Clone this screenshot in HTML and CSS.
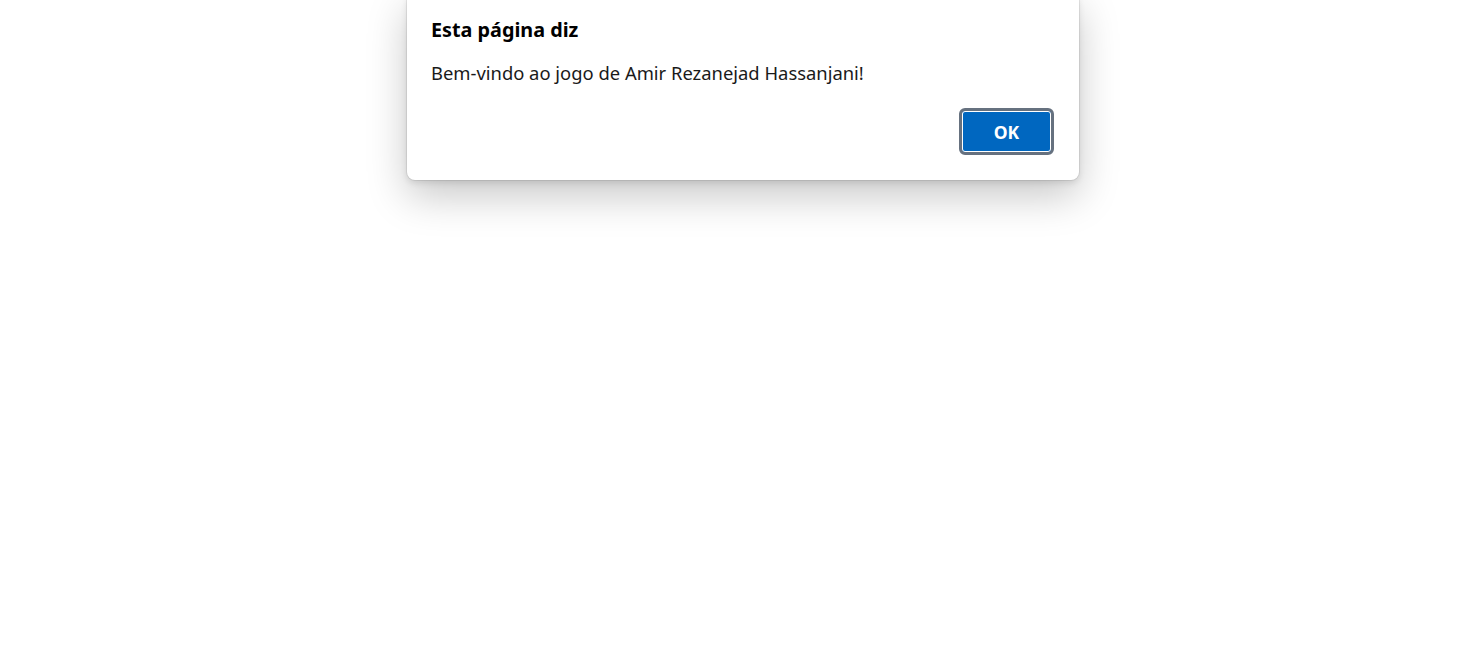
FILE: index.html
```html
<!DOCTYPE html>
<html lang="pt">
<head>
<meta charset="utf-8">
<title>Alerta</title>
<link rel="stylesheet" href="styles.css">
</head>
<body>
<div class="dialog" role="alertdialog">
  <h1 class="dialog-title">Esta página diz</h1>
  <p class="dialog-message">Bem-vindo ao jogo de Amir Rezanejad Hassanjani!</p>
  <div class="dialog-actions">
    <button class="btn-ok" type="button">OK</button>
  </div>
</div>
</body>
</html>
```
FILE: styles.css
```css
html, body {
  margin: 0;
  padding: 0;
  background: #ffffff;
  width: 1480px;
  height: 655px;
  overflow: hidden;
}
body {
  font-family: "Noto Sans", "Open Sans", sans-serif;
  color: #1a1a1a;
}
.dialog {
  position: absolute;
  left: 407px;
  top: -7px;
  width: 672px;
  box-sizing: border-box;
  padding: 24px 25px 25px 24px;
  background: #ffffff;
  border-radius: 8px;
  box-shadow: 0 0 0 1px rgba(0,0,0,0.07), 0 16px 40px rgba(0,0,0,0.22), 0 3px 6px rgba(0,0,0,0.1);
  display: flex;
  flex-direction: column;
}
.dialog-title {
  margin: 0;
  font-size: 19.8px;
  font-weight: 700;
  line-height: 26px;
  color: #000000;
}
.dialog-message {
  margin: 18px 0 0 0;
  font-size: 18.4px;
  line-height: 24px;
  color: #1a1a1a;
}
.dialog-actions {
  display: flex;
  justify-content: flex-end;
  margin-top: 23px;
}
.btn-ok {
  width: 95px;
  height: 47px;
  box-sizing: border-box;
  border: 3px solid #66717f;
  border-radius: 6px;
  background: #0067c0;
  box-shadow: inset 0 0 0 1px #ffffff;
  color: #ffffff;
  font-family: "Noto Sans", "Open Sans", sans-serif;
  font-size: 17.5px;
  font-weight: 700;
  padding: 0;
}
```
